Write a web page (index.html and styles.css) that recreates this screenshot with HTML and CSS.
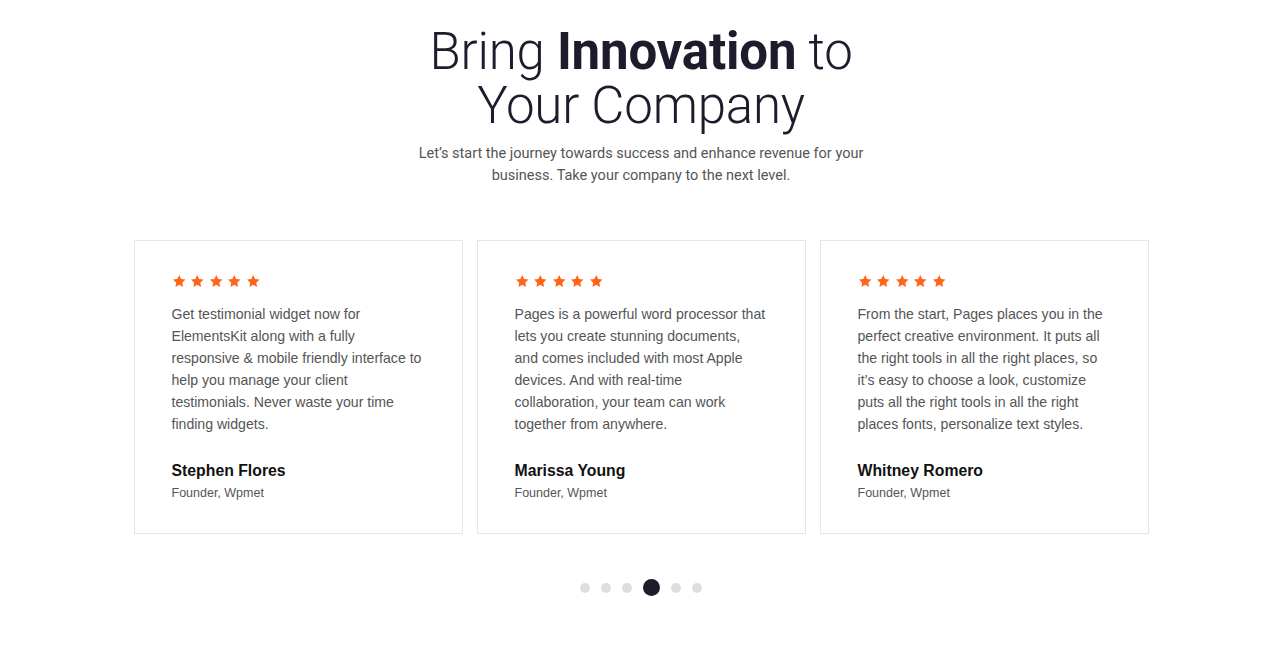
FILE: index.html
```html
<!DOCTYPE html>
<html lang="en">
<head>
<meta charset="utf-8">
<title>Testimonials</title>
<link rel="stylesheet" href="styles.css">
</head>
<body>
<section class="section">
  <h1 class="title">Bring <strong>Innovation</strong> to<br>Your Company</h1>
  <p class="lead">Let’s start the journey towards success and enhance revenue for your<br>business. Take your company to the next level.</p>

  <div class="cards">
    <article class="card">
      <div class="stars">
        <svg viewBox="0 0 24 24"><path d="M12 1.8l3.1 6.6 7.2.9-5.3 5 1.4 7.1L12 17.9l-6.4 3.5 1.4-7.1-5.3-5 7.2-.9z"/></svg>
        <svg viewBox="0 0 24 24"><path d="M12 1.8l3.1 6.6 7.2.9-5.3 5 1.4 7.1L12 17.9l-6.4 3.5 1.4-7.1-5.3-5 7.2-.9z"/></svg>
        <svg viewBox="0 0 24 24"><path d="M12 1.8l3.1 6.6 7.2.9-5.3 5 1.4 7.1L12 17.9l-6.4 3.5 1.4-7.1-5.3-5 7.2-.9z"/></svg>
        <svg viewBox="0 0 24 24"><path d="M12 1.8l3.1 6.6 7.2.9-5.3 5 1.4 7.1L12 17.9l-6.4 3.5 1.4-7.1-5.3-5 7.2-.9z"/></svg>
        <svg viewBox="0 0 24 24"><path d="M12 1.8l3.1 6.6 7.2.9-5.3 5 1.4 7.1L12 17.9l-6.4 3.5 1.4-7.1-5.3-5 7.2-.9z"/></svg>
      </div>
      <p class="quote">Get testimonial widget now for ElementsKit along with a fully responsive &amp; mobile friendly interface to help you manage your client testimonials. Never waste your time finding widgets.</p>
      <h3 class="name">Stephen Flores</h3>
      <p class="role">Founder, Wpmet</p>
    </article>
    <article class="card">
      <div class="stars">
        <svg viewBox="0 0 24 24"><path d="M12 1.8l3.1 6.6 7.2.9-5.3 5 1.4 7.1L12 17.9l-6.4 3.5 1.4-7.1-5.3-5 7.2-.9z"/></svg>
        <svg viewBox="0 0 24 24"><path d="M12 1.8l3.1 6.6 7.2.9-5.3 5 1.4 7.1L12 17.9l-6.4 3.5 1.4-7.1-5.3-5 7.2-.9z"/></svg>
        <svg viewBox="0 0 24 24"><path d="M12 1.8l3.1 6.6 7.2.9-5.3 5 1.4 7.1L12 17.9l-6.4 3.5 1.4-7.1-5.3-5 7.2-.9z"/></svg>
        <svg viewBox="0 0 24 24"><path d="M12 1.8l3.1 6.6 7.2.9-5.3 5 1.4 7.1L12 17.9l-6.4 3.5 1.4-7.1-5.3-5 7.2-.9z"/></svg>
        <svg viewBox="0 0 24 24"><path d="M12 1.8l3.1 6.6 7.2.9-5.3 5 1.4 7.1L12 17.9l-6.4 3.5 1.4-7.1-5.3-5 7.2-.9z"/></svg>
      </div>
      <p class="quote">Pages is a powerful word processor that lets you create stunning documents, and comes included with most Apple devices. And with real-time collaboration, your team can work together from anywhere.</p>
      <h3 class="name">Marissa Young</h3>
      <p class="role">Founder, Wpmet</p>
    </article>
    <article class="card">
      <div class="stars">
        <svg viewBox="0 0 24 24"><path d="M12 1.8l3.1 6.6 7.2.9-5.3 5 1.4 7.1L12 17.9l-6.4 3.5 1.4-7.1-5.3-5 7.2-.9z"/></svg>
        <svg viewBox="0 0 24 24"><path d="M12 1.8l3.1 6.6 7.2.9-5.3 5 1.4 7.1L12 17.9l-6.4 3.5 1.4-7.1-5.3-5 7.2-.9z"/></svg>
        <svg viewBox="0 0 24 24"><path d="M12 1.8l3.1 6.6 7.2.9-5.3 5 1.4 7.1L12 17.9l-6.4 3.5 1.4-7.1-5.3-5 7.2-.9z"/></svg>
        <svg viewBox="0 0 24 24"><path d="M12 1.8l3.1 6.6 7.2.9-5.3 5 1.4 7.1L12 17.9l-6.4 3.5 1.4-7.1-5.3-5 7.2-.9z"/></svg>
        <svg viewBox="0 0 24 24"><path d="M12 1.8l3.1 6.6 7.2.9-5.3 5 1.4 7.1L12 17.9l-6.4 3.5 1.4-7.1-5.3-5 7.2-.9z"/></svg>
      </div>
      <p class="quote">From the start, Pages places you in the perfect creative environment. It puts all the right tools in all the right places, so it’s easy to choose a look, customize puts all the right tools in all the right places fonts, personalize text styles.</p>
      <h3 class="name">Whitney Romero</h3>
      <p class="role">Founder, Wpmet</p>
    </article>
  </div>

  <div class="dots">
    <span class="dot"></span>
    <span class="dot"></span>
    <span class="dot"></span>
    <span class="dot active"></span>
    <span class="dot"></span>
    <span class="dot"></span>
  </div>
</section>
</body>
</html>
```

FILE: styles.css
```css
* { box-sizing: border-box; }
html, body { margin: 0; padding: 0; background: #fff; }
body { font-family: Roboto, "Liberation Sans", sans-serif; color: #1d1c2c; }

.section {
  display: flex;
  flex-direction: column;
  align-items: center;
  padding: 25px 0 0 2px;
}

.title {
  margin: 0;
  font-family: Roboto, sans-serif;
  font-weight: 300;
  font-size: 51px;
  line-height: 54px;
  text-align: center;
  color: #1d1c2c;
  letter-spacing: -0.2px;
}
.title strong { font-weight: 700; }

.lead {
  margin: 10px 0 0;
  font-family: Roboto, sans-serif;
  font-size: 14.5px;
  line-height: 22px;
  color: #555;
  text-align: center;
}

.cards {
  margin-top: 53px;
  display: grid;
  grid-template-columns: repeat(3, 329px);
  gap: 14px;
}

.card {
  border: 1px solid #e6e6ea;
  height: 294px;
  padding: 33px 0 0 37px;
  font-family: "Liberation Sans", Arial, sans-serif;
}

.stars { display: flex; gap: 4px; height: 15px; }
.stars svg { width: 14.5px; height: 14.5px; fill: #ff6417; }

.quote {
  margin: 14px 0 0;
  width: 251.5px;
  font-size: 14.1px;
  line-height: 22px;
  color: #555;
  height: 132px;
}

.name {
  margin: 25px 0 0;
  font-size: 15.8px;
  font-weight: 700;
  color: #111;
  line-height: 22px;
}

.role {
  margin: 1px 0 0;
  font-size: 12.5px;
  line-height: 20px;
  color: #555;
}

.dots {
  margin-top: 45px;
  display: flex;
  align-items: center;
  gap: 11px;
}
.dot { width: 10px; height: 10px; border-radius: 50%; background: #dedee2; }
.dot.active { width: 17px; height: 17px; background: #1d1c2c; }
```
